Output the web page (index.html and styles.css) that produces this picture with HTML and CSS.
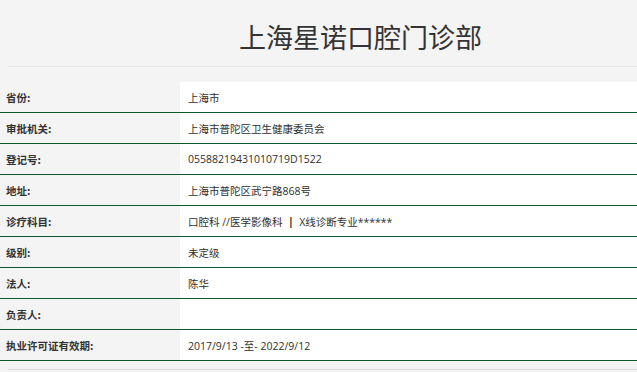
FILE: index.html
```html
<!DOCTYPE html>
<html lang="zh-CN">
<head>
<meta charset="utf-8">
<title>上海星诺口腔门诊部</title>
<link rel="stylesheet" href="styles.css">
</head>
<body>
<div class="header"><h1 class="title">上海星诺口腔门诊部</h1></div>
<div class="info">
  <div class="row"><div class="label">省份:</div><div class="value">上海市</div></div>
  <div class="row"><div class="label">审批机关:</div><div class="value">上海市普陀区卫生健康委员会</div></div>
  <div class="row"><div class="label">登记号:</div><div class="value">05588219431010719D1522</div></div>
  <div class="row"><div class="label">地址:</div><div class="value">上海市普陀区武宁路868号</div></div>
  <div class="row"><div class="label">诊疗科目:</div><div class="value">口腔科 //医学影像科&nbsp;&nbsp;<span class="sep">|</span>&nbsp;&nbsp;X线诊断专业******</div></div>
  <div class="row"><div class="label">级别:</div><div class="value">未定级</div></div>
  <div class="row"><div class="label">法人:</div><div class="value">陈华</div></div>
  <div class="row"><div class="label">负责人:</div><div class="value"></div></div>
  <div class="row"><div class="label">执业许可证有效期:</div><div class="value">2017/9/13 -至- 2022/9/12</div></div>
</div>
<div class="footer-line"></div>
</body>
</html>
```
FILE: styles.css
```css
html, body {
  margin: 0;
  padding: 0;
  background: #f4f4f4;
  color: #333;
  font-family: "Open Sans", "Noto Sans CJK SC", sans-serif;
}
.header {
  margin: 0 0 0 8px;
  height: 67px;
  border-bottom: 1px solid #e6e6e6;
  display: flex;
  align-items: center;
  justify-content: center;
  padding-left: 76px;
  box-sizing: border-box;
}
.title {
  margin: 0;
  font-family: "Noto Sans CJK SC", sans-serif;
  font-weight: 400;
  font-size: 27px;
  line-height: 1;
  color: #333;
  padding-top: 6px;
}
.info {
  margin-top: 15px;
}
.row {
  display: flex;
  height: 31px;
  box-sizing: border-box;
  border-bottom: 1px solid #0b5a2c;
  font-size: 10.5px;
}
.label {
  width: 180px;
  flex: none;
  padding-left: 6px;
  box-sizing: border-box;
  display: flex;
  align-items: center;
  font-family: "Noto Sans CJK SC", sans-serif;
  font-weight: 700;
  background: #f4f4f4;
}
.value {
  flex: 1;
  background: #fff;
  padding-left: 8px;
  display: flex;
  align-items: center;
  white-space: pre;
  color: #2f2f2f;
}
.sep {
  font-weight: 700;
  color: #222;
}
.footer-line {
  margin: 8px 0 0 8px;
  border-top: 1px solid #dcdcdc;
}
```
